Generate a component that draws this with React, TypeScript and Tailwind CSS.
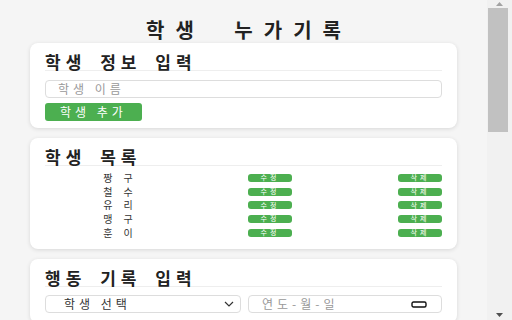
import React from 'react';

const font = { fontFamily: '"Noto Sans CJK KR", "Noto Sans", sans-serif' };

const students = ['짱구', '철수', '유리', '맹구', '훈이'];

const SmallButton: React.FC<{ label: string }> = ({ label }) => (
  <button className="flex h-[8px] w-[44px] items-center justify-center whitespace-nowrap rounded-[3px] bg-[#4caf50] text-[7px] leading-none tracking-[3px] text-white">
    {label}
  </button>
);

const Card: React.FC<{ title: string; className?: string; children: React.ReactNode }> = ({
  title,
  className = '',
  children,
}) => (
  <div className={`rounded-[8px] bg-white px-[15px] pt-[10px] shadow-[0_1px_4px_rgba(0,0,0,0.12)] ${className}`}>
    <h2 className="whitespace-nowrap border-b border-[#eeeeee] text-[17px] font-bold leading-[17px] tracking-[5px] text-[#222] [word-spacing:5px]">
      {title}
    </h2>
    {children}
  </div>
);

const Scrollbar: React.FC = () => (
  <div className="flex w-[25px] shrink-0 flex-col bg-[#f1f1f1]">
    <div className="flex h-[8px] items-center justify-center">
      <svg width="7" height="4" viewBox="0 0 7 4">
        <path d="M0 4 L3.5 0 L7 4 Z" fill="#a3a3a3" />
      </svg>
    </div>
    <div className="ml-[1px] h-[124px] w-[20px] bg-[#c1c1c1]" />
    <div className="flex-1" />
    <div className="flex h-[10px] items-center justify-center">
      <svg width="7" height="4" viewBox="0 0 7 4">
        <path d="M0 0 L3.5 4 L7 0 Z" fill="#505050" />
      </svg>
    </div>
  </div>
);

export default function App() {
  return (
    <div className="flex h-[320px] w-[512px] overflow-hidden bg-[#f5f5f5]" style={font}>
      <div className="min-w-0 flex-1 overflow-hidden px-[30px]">
        <h1 className="mb-[3px] whitespace-nowrap pl-[11px] pt-[20px] text-center text-[20px] font-bold leading-[20px] tracking-[11px] text-[#222] [word-spacing:14px]">
          학생 누가기록
        </h1>

        <Card title="학생 정보 입력" className="mb-[10px] pb-[7px]">
          <div className="mt-[9px] flex h-[18px] items-center whitespace-nowrap rounded-[4px] border border-[#dddddd] pl-[12px] text-[12px] tracking-[4px] text-[#999]">
            학생 이름
          </div>
          <button className="mt-[5px] flex h-[18px] w-[97px] items-center justify-center whitespace-nowrap rounded-[3px] bg-[#4caf50] text-[12px] tracking-[4px] text-white">
            학생 추가
          </button>
        </Card>

        <Card title="학생 목록" className="mb-[10px] pb-[10px]">
          <div className="mt-[5px] flex flex-col">
            {students.map((name) => (
              <div key={name} className="grid h-[13.7px] grid-cols-[146px_158px_1fr] items-center">
                <span className="justify-self-center whitespace-nowrap pl-[11px] text-[10px] leading-[10px] tracking-[11px] text-[#333]">
                  {name}
                </span>
                <span className="justify-self-center">
                  <SmallButton label="수정" />
                </span>
                <span className="justify-self-end">
                  <SmallButton label="삭제" />
                </span>
              </div>
            ))}
          </div>
        </Card>

        <Card title="행동 기록 입력" className="pb-[10px]">
          <div className="mt-[8px] flex gap-[7px]">
            <div className="flex h-[18px] w-[196px] items-center justify-between whitespace-nowrap rounded-[4px] border border-[#dddddd] pl-[18px] pr-[6px] text-[12px] tracking-[4px] text-[#333]">
              <span>학생 선택</span>
              <svg width="10" height="6" viewBox="0 0 10 6">
                <path d="M1 1 L5 5 L9 1" fill="none" stroke="#333" strokeWidth="1.2" />
              </svg>
            </div>
            <div className="flex h-[18px] flex-1 items-center justify-between whitespace-nowrap rounded-[4px] border border-[#dddddd] pl-[13px] pr-[14px] text-[12px] tracking-[4px] text-[#999]">
              <span>연도-월-일</span>
              <svg width="16" height="7" viewBox="0 0 16 7">
                <rect x="1" y="1" width="14" height="5" rx="1.5" fill="none" stroke="#111" strokeWidth="1.4" />
              </svg>
            </div>
          </div>
        </Card>
      </div>
      <Scrollbar />
    </div>
  );
}
